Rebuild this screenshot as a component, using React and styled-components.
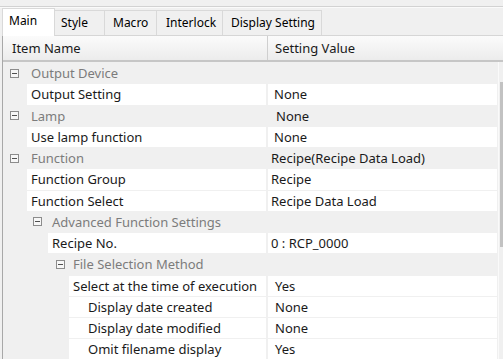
import React from 'react';
import styled, { createGlobalStyle } from 'styled-components';

const GlobalStyle = createGlobalStyle`
  html, body {
    margin: 0;
    padding: 0;
    background: #f0f0f0;
  }
  * { box-sizing: border-box; }
`;

const Page = styled.div`
  width: 503px;
  height: 359px;
  overflow: hidden;
  background: #f0f0f0;
  font-family: "Noto Sans", "Open Sans", sans-serif;
  font-size: 13px;
  color: #1a1a1a;
`;

const TopRule = styled.div`
  height: 7px;
  border-bottom: 1px solid #d2d2d2;
  box-shadow: 0 1px 0 #fafafa;
`;

const TabStrip = styled.div`
  display: flex;
  align-items: flex-end;
  height: 28px;
  padding: 0 0 0 3px;
  font-size: 12px;
`;

const Tab = styled.div`
  width: ${p => p.$w}px;
  height: ${p => (p.$active ? '28px' : '25px')};
  padding-left: ${p => p.$pad}px;
  display: flex;
  align-items: center;
  padding-bottom: ${p => (p.$active ? '4px' : '1px')};
  background: ${p => (p.$active ? '#ffffff' : '#f0f0f0')};
  border: 1px solid #d9d9d9;
  border-bottom: none;
  margin-left: -1px;
  color: #000;
  white-space: nowrap;
  position: relative;
  z-index: ${p => (p.$active ? 2 : 1)};
  margin-bottom: ${p => (p.$active ? '-1px' : '0')};
`;

const Grid = styled.div`
  margin-left: 2px;
  border-left: 1px solid #a8a8a8;
  background: #f0f0f0;
`;

const Header = styled.div`
  display: grid;
  grid-template-columns: 264px 1fr;
  height: 27px;
  background: linear-gradient(#fbfbfb, #ececec);
  border-top: 1px solid #d6d6d6;
  border-bottom: 2px solid #c6c6c6;
`;

const HeaderCell = styled.div`
  display: flex;
  align-items: center;
  padding-left: ${p => p.$pad}px;
  color: #1a1a1a;
  & + & {
    border-left: 1px solid #cfcfcf;
  }
`;

const Body = styled.div`
  display: flex;
`;

const Rows = styled.div`
  flex: 1;
  padding-top: 1px;
`;

const Row = styled.div`
  display: flex;
  height: 20.25px;
  margin-bottom: 1px;
  align-items: stretch;
`;

const NameCell = styled.div`
  width: ${p => 263 - p.$indent}px;
  margin-left: ${p => p.$indent}px;
  background: #ffffff;
  display: flex;
  align-items: center;
  padding-left: ${p => p.$pad}px;
  white-space: nowrap;
  overflow: hidden;
`;

const ValueCell = styled.div`
  flex: 1;
  margin-left: 2px;
  background: ${p => (p.$category ? 'transparent' : '#ffffff')};
  display: flex;
  align-items: center;
  padding-left: ${p => p.$pad}px;
  white-space: nowrap;
`;

const CategoryName = styled.div`
  width: 263px;
  display: flex;
  align-items: center;
  color: #7c7c7c;
  padding-left: ${p => 7 + 23 * p.$level}px;
  white-space: nowrap;
`;

const Toggle = styled.span`
  width: 9px;
  height: 9px;
  border: 1px solid #8c8c8c;
  background: #f7f7f7;
  display: inline-flex;
  align-items: center;
  justify-content: center;
  flex-shrink: 0;
  margin-right: ${p => 12 - 2 * p.$level}px;
  &::after {
    content: '';
    width: 5px;
    height: 1px;
    background: #505050;
  }
`;

const ScrollTrack = styled.div`
  width: 5px;
  margin-left: 1px;
  background: #f0f0f0;
  border-left: 1px solid #fafafa;
`;

const Thumb = styled.div`
  margin-top: 20px;
  margin-left: 1px;
  height: 165px;
  background: #c2c2c2;
`;

const rows = [
  { cat: true, level: 0, name: 'Output Device' },
  { indent: 24, pad: 4, name: 'Output Setting', value: 'None', vpad: 6 },
  { cat: true, level: 0, name: 'Lamp', value: 'None', vpad: 8 },
  { indent: 24, pad: 4, name: 'Use lamp function', value: 'None', vpad: 6 },
  { cat: true, level: 0, name: 'Function', value: 'Recipe(Recipe Data Load)', vpad: 3 },
  { indent: 24, pad: 4, name: 'Function Group', value: 'Recipe', vpad: 3 },
  { indent: 24, pad: 4, name: 'Function Select', value: 'Recipe Data Load', vpad: 3 },
  { cat: true, level: 1, name: 'Advanced Function Settings' },
  { indent: 45, pad: 4, name: 'Recipe No.', value: '0 : RCP_0000', vpad: 3 },
  { cat: true, level: 2, name: 'File Selection Method' },
  { indent: 66, pad: 4, name: 'Select at the time of execution', value: 'Yes', vpad: 7 },
  { indent: 66, pad: 19, name: 'Display date created', value: 'None', vpad: 7 },
  { indent: 66, pad: 19, name: 'Display date modified', value: 'None', vpad: 7 },
  { indent: 66, pad: 19, name: 'Omit filename display', value: 'Yes', vpad: 7 },
];

const tabs = [
  { label: 'Main', w: 53, pad: 6, active: true },
  { label: 'Style', w: 51, pad: 6 },
  { label: 'Macro', w: 53, pad: 8 },
  { label: 'Interlock', w: 67, pad: 9 },
  { label: 'Display Setting', w: 100, pad: 8 },
];

export default function App() {
  return (
    <Page>
      <GlobalStyle />
      <TopRule />
      <TabStrip>
        {tabs.map(t => (
          <Tab key={t.label} $active={t.active} $w={t.w} $pad={t.pad}>{t.label}</Tab>
        ))}
      </TabStrip>
      <Grid>
        <Header>
          <HeaderCell $pad={9}>Item Name</HeaderCell>
          <HeaderCell $pad={7}>Setting Value</HeaderCell>
        </Header>
        <Body>
          <Rows>
            {rows.map((r, i) =>
              r.cat ? (
                <Row key={i}>
                  <CategoryName $level={r.level}>
                    <Toggle $level={r.level} />
                    {r.name}
                  </CategoryName>
                  <ValueCell $category $pad={r.vpad || 0}>{r.value}</ValueCell>
                </Row>
              ) : (
                <Row key={i}>
                  <NameCell $indent={r.indent} $pad={r.pad}>{r.name}</NameCell>
                  <ValueCell $pad={r.vpad}>{r.value}</ValueCell>
                </Row>
              )
            )}
          </Rows>
          <ScrollTrack>
            <Thumb />
          </ScrollTrack>
        </Body>
      </Grid>
    </Page>
  );
}
